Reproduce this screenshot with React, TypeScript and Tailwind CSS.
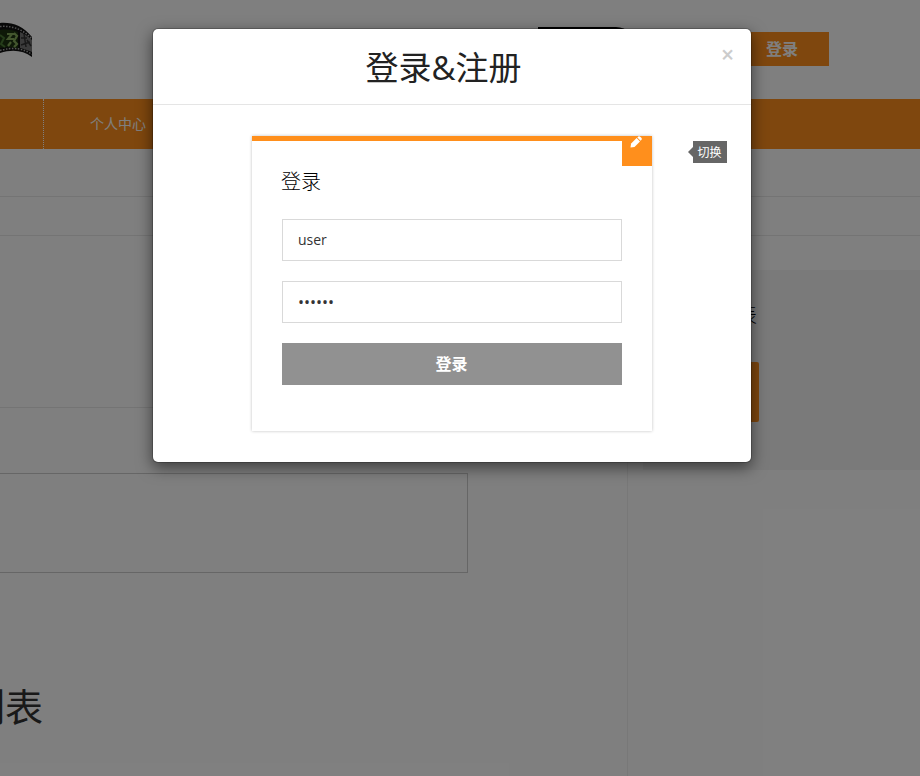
import { useState } from "react";
import { clsx } from "clsx";

const Logo = () => (
  <svg width="33" height="36" viewBox="0 0 33 36" className="mt-[22px] shrink-0">
    <path d="M0 1C12 0 23 4 32 15V35C23 28 12 27 0 31Z" fill="#111" />
    <path d="M0 8C8 7 13 8 18 10V27C12 25 6 25 0 26Z" fill="#1d3311" />
    <path d="M20 10C25 12 29 15 32 18V30C28 28 24 27 20 26Z" fill="#777" />
    <path d="M7 12H12L8 17H14M11 20L8 24M14 11L17 14L14 19L17 22L14 25" stroke="#86ad5c" strokeWidth="2.2" fill="none" />
    <path d="M0 13L4 16L1 22L5 25" stroke="#4b7a35" strokeWidth="2" fill="none" />
    <path d="M21 16H27M24 12L26 25M21 23L30 20M27 18L31 24" stroke="#333" strokeWidth="1.5" fill="none" />
    <path d="M0 4.500C12 3.500 23 7 32 17" stroke="#aaa" strokeWidth="1.500" strokeDasharray="1.500 1.500" fill="none" />
    <path d="M0 28.500C12 25 23 26 32 32.500" stroke="#aaa" strokeWidth="1.500" strokeDasharray="1.500 1.500" fill="none" />
  </svg>
);

const PencilIcon = () => (
  <svg width="12" height="12" viewBox="0 0 12 12" fill="#fff" className="mr-0.5">
    <path d="M.5 11.500L1.100 7.600L6.600 2.100L10 5.400L4.500 10.900Z" />
    <path d="M7.300 1.400L8.300.5Q9.300-.2 10.200.7L11.300 1.800Q12.200 2.800 11.500 3.800L10.600 4.800Z" />
  </svg>
);

const Page = () => (
  <div className="flex h-full flex-col bg-white">
    <header className="flex h-[99px] shrink-0 items-start">
      <Logo />
      <div className="mt-[27px] ml-[505px] h-[30px] w-[98px] rounded-tr-[20px] bg-black" />
      <button className="mt-8 ml-[98px] h-[34px] w-[95px] bg-[#ff8f1c] pl-px text-base font-bold text-white">
        登录
      </button>
    </header>

    <nav className="flex h-[50px] shrink-0 bg-[#ff8f1c] text-sm text-white">
      <div className="w-11 border-r border-dotted border-white" />
      <a className="pl-[46px] leading-[50px]">个人中心</a>
    </nav>

    <div className="h-[48px] shrink-0 border-b border-[#e9e9e9]" />
    <div className="h-[39px] shrink-0 border-b border-[#e9e9e9]" />

    <main className="flex min-h-0 flex-1">
      <section className="w-[628px] shrink-0 border-r border-[#f0f0f0]">
        <div className="h-[172px] border-b border-[#e9e9e9]" />
        <div className="mt-[65px] h-[100px] w-[468px] border border-l-0 border-[#ccc]" />
        <h2 className="mt-[106px] -ml-[33px] text-[38px] leading-[54px] text-[#333]">列表</h2>
      </section>
      <aside className="mt-[34px] ml-[15px] h-[200px] flex-1 bg-[#f5f5f5] pt-[31px]">
        <h3 className="w-[114px] text-right text-xl leading-[30px] font-light text-black">列表</h3>
        <div className="mt-[31px] h-[60px] w-[116px] rounded-[2px] bg-[#ff8f1c]" />
      </aside>
    </main>
  </div>
);

const LoginForm = () => {
  const [user, setUser] = useState("user");
  const [password, setPassword] = useState("123456");
  const inputClass =
    "mb-5 block h-[42px] w-full border border-[#d9d9d9] px-[15px] text-[#333] outline-none";

  return (
    <form className="px-[30px] pt-[26px]" onSubmit={(e) => e.preventDefault()}>
      <h2 className="mb-[22px] -ml-px text-xl leading-[30px] font-light text-black">登录</h2>
      <input
        className={clsx(inputClass, "pb-0.5 text-sm")}
        value={user}
        onChange={(e) => setUser(e.target.value)}
      />
      <input
        type="password"
        className={clsx(inputClass, "text-base")}
        value={password}
        onChange={(e) => setPassword(e.target.value)}
      />
      <button className="h-[42px] w-full bg-[#919191] pr-px text-base font-bold text-white">登录</button>
    </form>
  );
};

const App = () => (
  <div className="relative h-[776px] w-[920px] overflow-hidden font-['Open_Sans','Noto_Sans_CJK_SC',sans-serif]">
    <Page />

    {/* Backdrop */}
    <div className="absolute inset-0 bg-black/50">
      <div className="mt-7 ml-[152px] h-[435px] w-[600px] rounded-md border border-black/20 bg-white bg-clip-padding shadow-[0_5px_15px_rgba(0,0,0,0.5)]">
        <div className="flex h-[76px] items-start border-b border-[#e5e5e5]">
          <h1 className="ml-[14px] flex-1 pt-[14px] text-center text-[33px] leading-[50px] text-[#222]">
            登录&amp;注册
          </h1>
          <button className="mt-[10px] mr-4 w-[15px] text-[23px] leading-[30px] font-semibold text-[#ccc]">
            ×
          </button>
        </div>

        <div className="flex items-start pt-[31px] pl-[99px]">
          <div className="relative h-[295px] w-[400px] border-t-[5px] border-[#ff8f1c] bg-white shadow-[0_0_3px_rgba(0,0,0,0.25)]">
            <LoginForm />
            <div className="absolute -top-[5px] right-0 flex h-[30px] w-[30px] justify-center bg-[#ff8f1c]">
              <PencilIcon />
            </div>
          </div>
          <div className="mt-[5px] ml-9 flex items-center">
            <div className="h-0 w-0 border-y-[5px] border-r-[5px] border-y-transparent border-r-[#666]" />
            <span className="h-[22px] w-[34px] bg-[#666] pr-px text-center text-xs leading-6 text-white">切换</span>
          </div>
        </div>
      </div>
    </div>
  </div>
);

export default App;
